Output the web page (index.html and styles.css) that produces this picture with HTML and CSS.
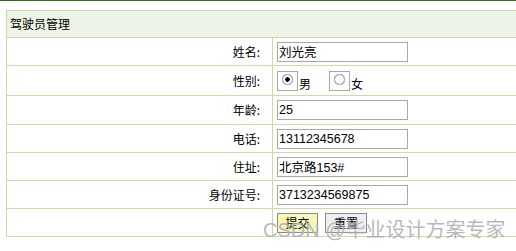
FILE: index.html
```html
<!DOCTYPE html>
<html lang="zh">
<head>
<meta charset="utf-8">
<title>驾驶员管理</title>
<link rel="stylesheet" href="styles.css">
</head>
<body>
<div class="topbar"></div>
<form class="wrap">
  <table class="form">
    <tr class="head"><td colspan="2">驾驶员管理</td></tr>
    <tr class="r1"><td class="lbl">姓名:</td><td class="val"><input class="txt" type="text" value="刘光亮"></td></tr>
    <tr class="r2"><td class="lbl">性别:</td><td class="val">
      <span class="radios">
        <label class="opt"><input class="rad" type="radio" name="sex" checked>男</label>
        <label class="opt"><input class="rad" type="radio" name="sex">女</label>
      </span>
    </td></tr>
    <tr class="r3"><td class="lbl">年龄:</td><td class="val"><input class="txt" type="text" value="25"></td></tr>
    <tr class="r4"><td class="lbl">电话:</td><td class="val"><input class="txt" type="text" value="13112345678"></td></tr>
    <tr class="r5"><td class="lbl">住址:</td><td class="val"><input class="txt" type="text" value="北京路153#"></td></tr>
    <tr class="r6"><td class="lbl">身份证号:</td><td class="val"><input class="txt" type="text" value="3713234569875"></td></tr>
    <tr class="r7"><td class="lbl"></td><td class="val">
      <span class="btns"><button class="btn submit" type="button">提交</button><button class="btn reset" type="button">重置</button></span>
    </td></tr>
  </table>
</form>
<div class="watermark">CSDN @毕业设计方案专家</div>
</body>
</html>
```
FILE: styles.css
```css
html, body {
  margin: 0;
  padding: 0;
  overflow: hidden;
  background: #fff;
}
body {
  font-family: "Noto Sans CJK SC", "Liberation Sans", sans-serif;
  font-size: 12px;
  color: #000;
  position: relative;
  width: 516px;
  height: 251px;
}
.topbar {
  height: 1px;
  background: #2a6b16;
}
.wrap {
  margin: 9px 0 0 6px;
}
.form {
  border-collapse: collapse;
  width: 530px;
}
.form td {
  border: 1px solid #cbdaa6;
  padding: 0;
  line-height: 14px;
}
.head td {
  background: #eef3e8;
  height: 26px;
  padding-left: 3px;
  border-top-color: #cfd9b0;
}
.lbl {
  width: 253px;
  text-align: right;
  padding-right: 12px !important;
}
.val {
  padding-left: 4px !important;
  vertical-align: middle;
}
.r1 td { height: 27px; }
.r2 td { height: 29px; }
.r3 td { height: 28px; }
.r4 td { height: 27px; }
.r5 td { height: 27px; }
.r6 td { height: 27px; }
.r7 td { height: 27px; }
.txt {
  box-sizing: border-box;
  display: block;
  width: 131px;
  height: 20px;
  margin: 0;
  border: 1px solid #a8a8a8;
  padding: 0 1px;
  font-family: "Liberation Sans", "Noto Sans CJK SC", sans-serif;
  font-size: 12.5px;
  color: #000;
  outline: none;
}
.radios {
  display: flex;
  align-items: flex-end;
  gap: 18px;
}
.opt {
  display: flex;
  align-items: flex-end;
  line-height: 14px;
}
.rad {
  -webkit-appearance: none;
  appearance: none;
  box-sizing: border-box;
  width: 21px;
  height: 20px;
  margin: 0 1px 0 0;
  border: 1px solid #a8a8a8;
  background: radial-gradient(circle at 9.5px 7.5px, #fff 0 4px, #a9b4c4 4.5px 5.5px, transparent 6px);
}
.rad:checked {
  background: radial-gradient(circle at 9.5px 7.5px, #000 0 2px, #fff 2.5px 4px, #a9b4c4 4.5px 5.5px, transparent 6px);
}
.btns {
  display: flex;
  gap: 7px;
}
.btn {
  box-sizing: border-box;
  height: 20px;
  width: 42px;
  margin: 0;
  padding: 0;
  border: 1px solid #8a8a8a;
  font-family: "Noto Sans CJK SC", sans-serif;
  font-size: 12px;
  line-height: 16px;
  color: #000;
}
.submit { background: #f7f7b8; width: 41px; }
.reset { background: #efefef; }
.watermark {
  position: absolute;
  left: 263px;
  top: 218px;
  font-family: "Liberation Sans", "Noto Sans CJK SC", sans-serif;
  font-size: 20px;
  line-height: 24px;
  color: rgba(120, 120, 120, 0.55);
  white-space: nowrap;
  text-shadow: 0 0 1px rgba(255,255,255,0.8);
}
```
